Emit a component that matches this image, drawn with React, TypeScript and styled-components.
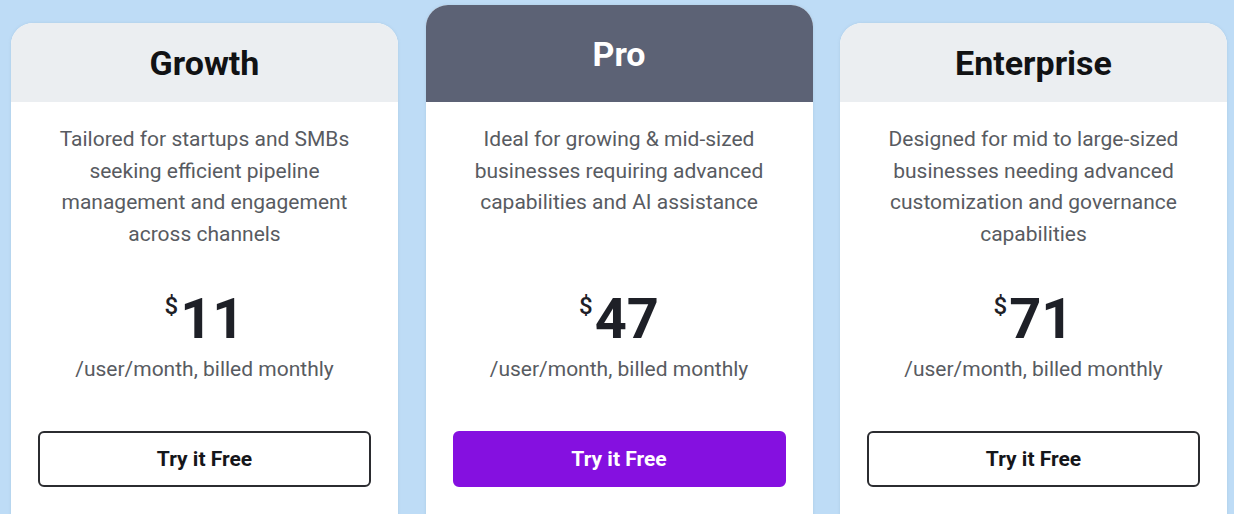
import React from "react";
import styled, { createGlobalStyle } from "styled-components";

type Plan = {
  name: string;
  description: string;
  price: number;
  featured?: boolean;
};

const plans: Plan[] = [
  {
    name: "Growth",
    description:
      "Tailored for startups and SMBs seeking efficient pipeline management and engagement across channels",
    price: 11,
  },
  {
    name: "Pro",
    description:
      "Ideal for growing & mid-sized businesses requiring advanced capabilities and AI assistance",
    price: 47,
    featured: true,
  },
  {
    name: "Enterprise",
    description:
      "Designed for mid to large-sized businesses needing advanced customization and governance capabilities",
    price: 71,
  },
];

const App: React.FunctionComponent = () => {
  return (
    <>
      <GlobalStyle />
      <Page>
        {plans.map((plan) => (
          <Card key={plan.name} $featured={plan.featured}>
            <CardHeader $featured={plan.featured}>
              <Title $featured={plan.featured}>{plan.name}</Title>
            </CardHeader>
            <CardBody>
              <Description>{plan.description}</Description>
              <Price>
                <Currency>$</Currency>
                {plan.price}
              </Price>
              <Billing>/user/month, billed monthly</Billing>
              <TryButton $featured={plan.featured}>Try it Free</TryButton>
            </CardBody>
          </Card>
        ))}
      </Page>
    </>
  );
};

export default App;

const GlobalStyle = createGlobalStyle`
  html, body {
    margin: 0;
    padding: 0;
    height: 100%;
    overflow: hidden;
    background: #bedcf6;
  }
  body {
    font-family: Roboto, "Liberation Sans", Arial, sans-serif;
  }
`;

const Page = styled.main`
  display: flex;
  align-items: flex-start;
  gap: 27.5px;
  padding: 0 7px 0 11px;
  height: 514px;
  overflow: hidden;
  background: #bedcf6;
`;

const Card = styled.section<{ $featured?: boolean }>`
  width: 387px;
  flex: 0 0 387px;
  margin-top: ${(p) => (p.$featured ? "5px" : "23px")};
  border-radius: 22px 22px 0 0;
  overflow: hidden;
  background: #fff;
  box-shadow: 0 0 3px rgba(120, 150, 180, 0.25);
`;

const CardHeader = styled.header<{ $featured?: boolean }>`
  display: flex;
  align-items: center;
  justify-content: center;
  height: ${(p) => (p.$featured ? "97px" : "79px")};
  background: ${(p) => (p.$featured ? "#5c6275" : "#ebeef1")};
`;

const Title = styled.h2<{ $featured?: boolean }>`
  margin: 0;
  font-size: 34px;
  font-weight: 700;
  color: ${(p) => (p.$featured ? "#ffffff" : "#111214")};
`;

const CardBody = styled.div`
  display: flex;
  flex-direction: column;
  align-items: center;
  padding: 22px 27px 40px;
`;

const Description = styled.p`
  margin: 0;
  min-height: 126px;
  font-size: 21px;
  line-height: 31.5px;
  text-align: center;
  color: #585b61;
`;

const Price = styled.div`
  display: flex;
  align-items: flex-start;
  margin-top: 41px;
  font-size: 56px;
  line-height: 56px;
  font-weight: 700;
  color: #1e2027;
`;

const Currency = styled.span`
  margin-top: 3px;
  margin-right: 2px;
  font-size: 24px;
  line-height: 24px;
  font-weight: 500;
`;

const Billing = styled.div`
  margin-top: 8px;
  font-size: 21px;
  line-height: 28px;
  color: #585b61;
`;

const TryButton = styled.button<{ $featured?: boolean }>`
  box-sizing: border-box;
  width: 100%;
  height: 56px;
  margin-top: 48px;
  border-radius: 6px;
  border: 2px solid ${(p) => (p.$featured ? "#8510e0" : "#2b2c30")};
  background: ${(p) => (p.$featured ? "#8510e0" : "#ffffff")};
  color: ${(p) => (p.$featured ? "#ffffff" : "#15161a")};
  font-family: Roboto, "Liberation Sans", Arial, sans-serif;
  font-size: 21px;
  font-weight: 700;
  cursor: pointer;
`;
